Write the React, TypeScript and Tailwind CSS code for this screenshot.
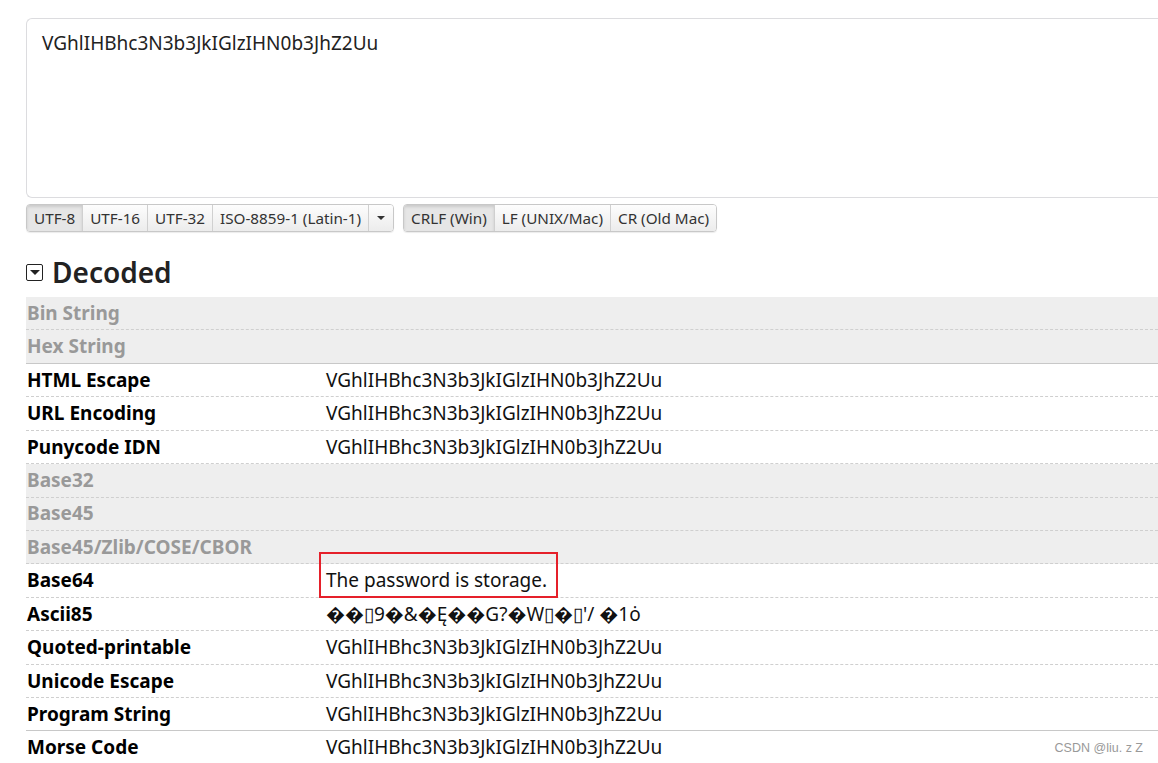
const encoded = "VGhlIHBhc3N3b3JkIGlzIHN0b3JhZ2Uu";

const rows = [
  { label: "Bin String", value: "", off: true },
  { label: "Hex String", value: "", off: true, solid: true },
  { label: "HTML Escape", value: encoded },
  { label: "URL Encoding", value: encoded },
  { label: "Punycode IDN", value: encoded },
  { label: "Base32", value: "", off: true },
  { label: "Base45", value: "", off: true },
  { label: "Base45/Zlib/COSE/CBOR", value: "", off: true },
  { label: "Base64", value: "The password is storage.", mark: true },
  { label: "Ascii85", value: "\uFFFD\uFFFD\u25AF9\uFFFD&\uFFFD\u0118\uFFFD\uFFFDG?\uFFFDW\u25AF\uFFFD\u25AF'/ \uFFFD1\u022F" },
  { label: "Quoted-printable", value: encoded },
  { label: "Unicode Escape", value: encoded },
  { label: "Program String", value: encoded, solid: true },
  { label: "Morse Code", value: encoded },
];

const btn = "flex items-center px-[7px] text-[15.25px] text-[#333] border-l border-[#d0d0d0] first:border-l-0";
const idle = "bg-gradient-to-b from-[#fdfdfd] to-[#ececec]";
const on = "bg-[#e6e6e6] shadow-[inset_0_2px_3px_rgba(0,0,0,0.12)]";

function Group({ items, active, caret }: { items: string[]; active: number; caret?: boolean }) {
  return (
    <div className="flex h-[28px] rounded-[4px] border border-[#c8c8c8] overflow-hidden shadow-[0_1px_1px_rgba(0,0,0,0.08)]">
      {items.map((t, i) => (
        <div key={t} className={`${btn} ${i === active ? on : idle}`}>
          {t}
        </div>
      ))}
      {caret && (
        <div className={`flex items-center justify-center w-[25px] border-l border-[#d0d0d0] ${idle}`}>
          <div className="w-0 h-0 border-l-[4px] border-r-[4px] border-t-[4px] border-l-transparent border-r-transparent border-t-[#333]" />
        </div>
      )}
    </div>
  );
}

export default function App() {
  return (
    <div
      className="w-[1158px] h-[763px] overflow-hidden bg-white relative"
      style={{ fontFamily: '"Segoe UI", "Noto Sans", sans-serif' }}
    >
      <div className="pl-[26px] pt-[18px]">
        <div className="h-[180px] -mr-[10px] rounded-l-[6px] border border-r-0 border-[#dcdcdf] pl-[15px] pt-[10px] text-[19px] text-[#222]">
          {encoded}
        </div>
        <div className="flex gap-[9px] mt-[6px]">
          <Group items={["UTF-8", "UTF-16", "UTF-32", "ISO-8859-1 (Latin-1)"]} active={0} caret />
          <Group items={["CRLF (Win)", "LF (UNIX/Mac)", "CR (Old Mac)"]} active={0} />
        </div>
        <div className="flex items-center mt-[23px] h-[34px] gap-[9px]">
          <div className="w-[17px] h-[17px] rounded-[2px] border-[1.5px] border-[#222] flex items-center justify-center">
            <div className="w-0 h-0 border-l-[5px] border-r-[5px] border-t-[5px] border-l-transparent border-r-transparent border-t-[#222] mt-[1px]" />
          </div>
          <div className="text-[28px] font-semibold text-[#222] leading-none">Decoded</div>
        </div>
        <div className="mt-[8px]">
          {rows.map((r) => (
            <div
              key={r.label}
              className={`flex items-center h-[33.43px] border-b ${r.solid ? "border-solid border-[#c8c8c8]" : "border-dashed border-[#cfcfcf]"} ${
                r.off ? "bg-[#eeeeee] text-[#999]" : "bg-white text-black"
              }`}
            >
              <div className="w-[300px] pl-[1px] text-[19px] font-bold">{r.label}</div>
              <div className="relative text-[19px] text-[#111] whitespace-nowrap">
                {r.value}
                {r.mark && (
                  <div className="absolute -left-[7px] -top-[14px] w-[239px] h-[46px] border-2 border-[#e5202a]" />
                )}
              </div>
            </div>
          ))}
        </div>
      </div>
      <div
        className="absolute right-[15px] bottom-[5px] text-[12.5px] text-[#999]"
        style={{ fontFamily: '"Liberation Sans", sans-serif' }}
      >
        CSDN @liu. z Z
      </div>
    </div>
  );
}
